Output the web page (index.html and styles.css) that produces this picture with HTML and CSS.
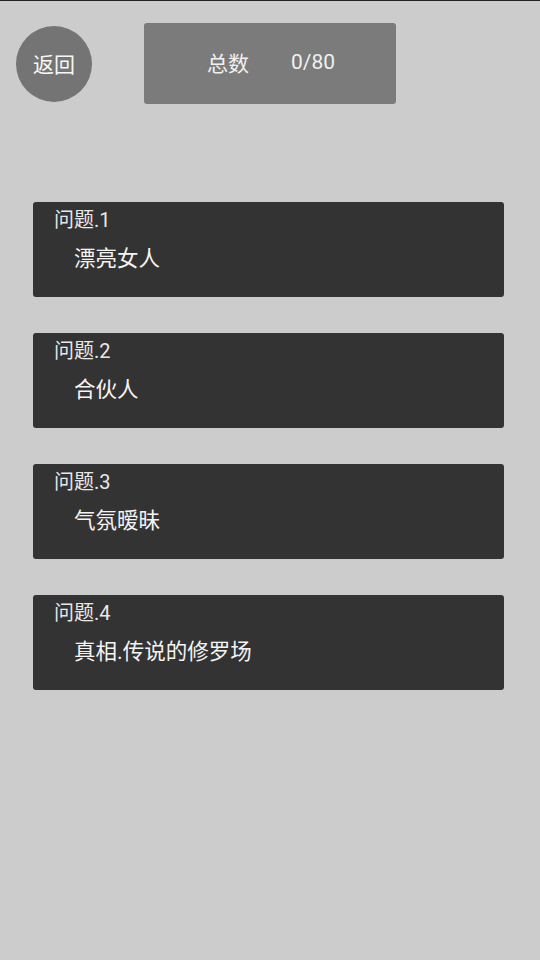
FILE: index.html
```html
<!DOCTYPE html>
<html lang="zh">
<head>
<meta charset="utf-8">
<link rel="stylesheet" href="styles.css">
</head>
<body>
<div class="screen">
  <header class="top">
    <div class="back">返回</div>
    <div class="total"><span class="total-label">总数</span><span class="total-value">0/80</span></div>
  </header>
  <main class="list">
    <div class="card"><div class="label">问题.1</div><div class="title">漂亮女人</div></div>
    <div class="card"><div class="label">问题.2</div><div class="title">合伙人</div></div>
    <div class="card"><div class="label">问题.3</div><div class="title">气氛暧昧</div></div>
    <div class="card"><div class="label">问题.4</div><div class="title">真相.传说的修罗场</div></div>
  </main>
</div>
</body>
</html>
```
FILE: styles.css
```css
html, body {
  margin: 0;
  padding: 0;
}
body {
  width: 540px;
  height: 960px;
  background: #cccccc;
  font-family: Roboto, "Noto Sans CJK SC", sans-serif;
  color: #f2f2f2;
  overflow: hidden;
}
.screen {
  border-top: 1px solid #222;
  height: 959px;
  box-sizing: border-box;
}
.top {
  display: flex;
  align-items: flex-start;
  padding-left: 16px;
}
.back {
  width: 76px;
  height: 76px;
  margin-top: 25px;
  border-radius: 50%;
  background: #747474;
  display: flex;
  align-items: center;
  justify-content: center;
  font-size: 21px;
  color: #f7f7f7;
  padding-bottom: 2px;
  box-sizing: border-box;
}
.total {
  margin-left: 52px;
  margin-top: 22px;
  width: 252px;
  height: 81px;
  border-radius: 3px;
  background: #7b7b7b;
  display: flex;
  align-items: center;
  padding-left: 63px;
  padding-bottom: 3px;
  box-sizing: border-box;
  font-size: 21px;
  color: #f0f0f0;
}
.total-value {
  margin-left: 42px;
}
.list {
  margin-top: 98px;
  padding: 0 36px 0 33px;
  display: flex;
  flex-direction: column;
  gap: 36px;
}
.card {
  height: 95px;
  background: #333333;
  border-radius: 3px;
  box-sizing: border-box;
  padding: 6px 0 0 21px;
}
.label {
  font-size: 20px;
  line-height: 24px;
  color: #e8e8e8;
}
.title {
  margin-top: 13px;
  padding-left: 20px;
  font-size: 21.5px;
  line-height: 28px;
  color: #f4f4f4;
}
```
